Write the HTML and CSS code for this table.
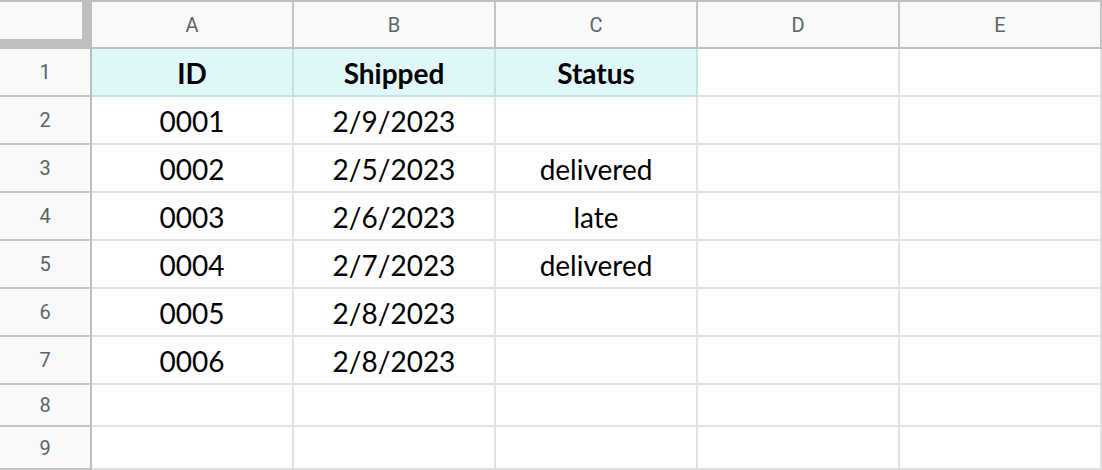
FILE: index.html
```html
<!DOCTYPE html>
<html>
<head>
<meta charset="utf-8">
<link rel="stylesheet" href="styles.css">
</head>
<body>
<div class="sheet">
  <div class="corner"></div>
  <div class="colhead">A</div>
  <div class="colhead">B</div>
  <div class="colhead">C</div>
  <div class="colhead">D</div>
  <div class="colhead">E</div>

  <div class="rowhead">1</div>
  <div class="cell hdr">ID</div>
  <div class="cell hdr">Shipped</div>
  <div class="cell hdr">Status</div>
  <div class="cell"></div>
  <div class="cell"></div>

  <div class="rowhead">2</div>
  <div class="cell">0001</div>
  <div class="cell">2/9/2023</div>
  <div class="cell"></div>
  <div class="cell"></div>
  <div class="cell"></div>

  <div class="rowhead">3</div>
  <div class="cell">0002</div>
  <div class="cell">2/5/2023</div>
  <div class="cell">delivered</div>
  <div class="cell"></div>
  <div class="cell"></div>

  <div class="rowhead">4</div>
  <div class="cell">0003</div>
  <div class="cell">2/6/2023</div>
  <div class="cell">late</div>
  <div class="cell"></div>
  <div class="cell"></div>

  <div class="rowhead">5</div>
  <div class="cell">0004</div>
  <div class="cell">2/7/2023</div>
  <div class="cell">delivered</div>
  <div class="cell"></div>
  <div class="cell"></div>

  <div class="rowhead">6</div>
  <div class="cell">0005</div>
  <div class="cell">2/8/2023</div>
  <div class="cell"></div>
  <div class="cell"></div>
  <div class="cell"></div>

  <div class="rowhead">7</div>
  <div class="cell">0006</div>
  <div class="cell">2/8/2023</div>
  <div class="cell"></div>
  <div class="cell"></div>
  <div class="cell"></div>

  <div class="rowhead">8</div>
  <div class="cell"></div>
  <div class="cell"></div>
  <div class="cell"></div>
  <div class="cell"></div>
  <div class="cell"></div>

  <div class="rowhead">9</div>
  <div class="cell"></div>
  <div class="cell"></div>
  <div class="cell"></div>
  <div class="cell"></div>
  <div class="cell"></div>
</div>
</body>
</html>
```

FILE: styles.css
```css
html, body {
  margin: 0;
  padding: 0;
  background: #ffffff;
}

.sheet {
  display: grid;
  grid-template-columns: 92px repeat(5, 202px);
  grid-template-rows: 49px repeat(7, 48px) 42px 43px;
  width: 1102px;
}

.sheet > div {
  box-sizing: border-box;
  display: flex;
  align-items: center;
  justify-content: center;
}

.corner {
  background: #f8f9fa;
  border-top: 2px solid #c0c0c0;
  border-right: 10px solid #bfbfbf;
  border-bottom: 10px solid #bfbfbf;
}

.colhead {
  background: #f8f9fa;
  border-top: 2px solid #c0c0c0;
  border-right: 2px solid #c4c4c4;
  border-bottom: 2px solid #c0c0c0;
  font-family: Roboto, "Liberation Sans", sans-serif;
  font-size: 20px;
  color: #5f6368;
  padding-top: 1px;
}

.rowhead {
  background: #f8f9fa;
  border-right: 2px solid #bdbdbd;
  border-bottom: 2px solid #c4c4c4;
  font-family: Roboto, "Liberation Sans", sans-serif;
  font-size: 20px;
  color: #5f6368;
}

.cell {
  background: #ffffff;
  border-right: 2px solid #e2e2e2;
  border-bottom: 2px solid #e2e2e2;
  font-family: Lato, "Open Sans", sans-serif;
  font-size: 28px;
  color: #000000;
  padding-top: 1px;
}

.cell.hdr {
  background: #e0f7fa;
  border-right-color: #c6e2e6;
  border-bottom-color: #c6e2e6;
  font-weight: bold;
}
```
